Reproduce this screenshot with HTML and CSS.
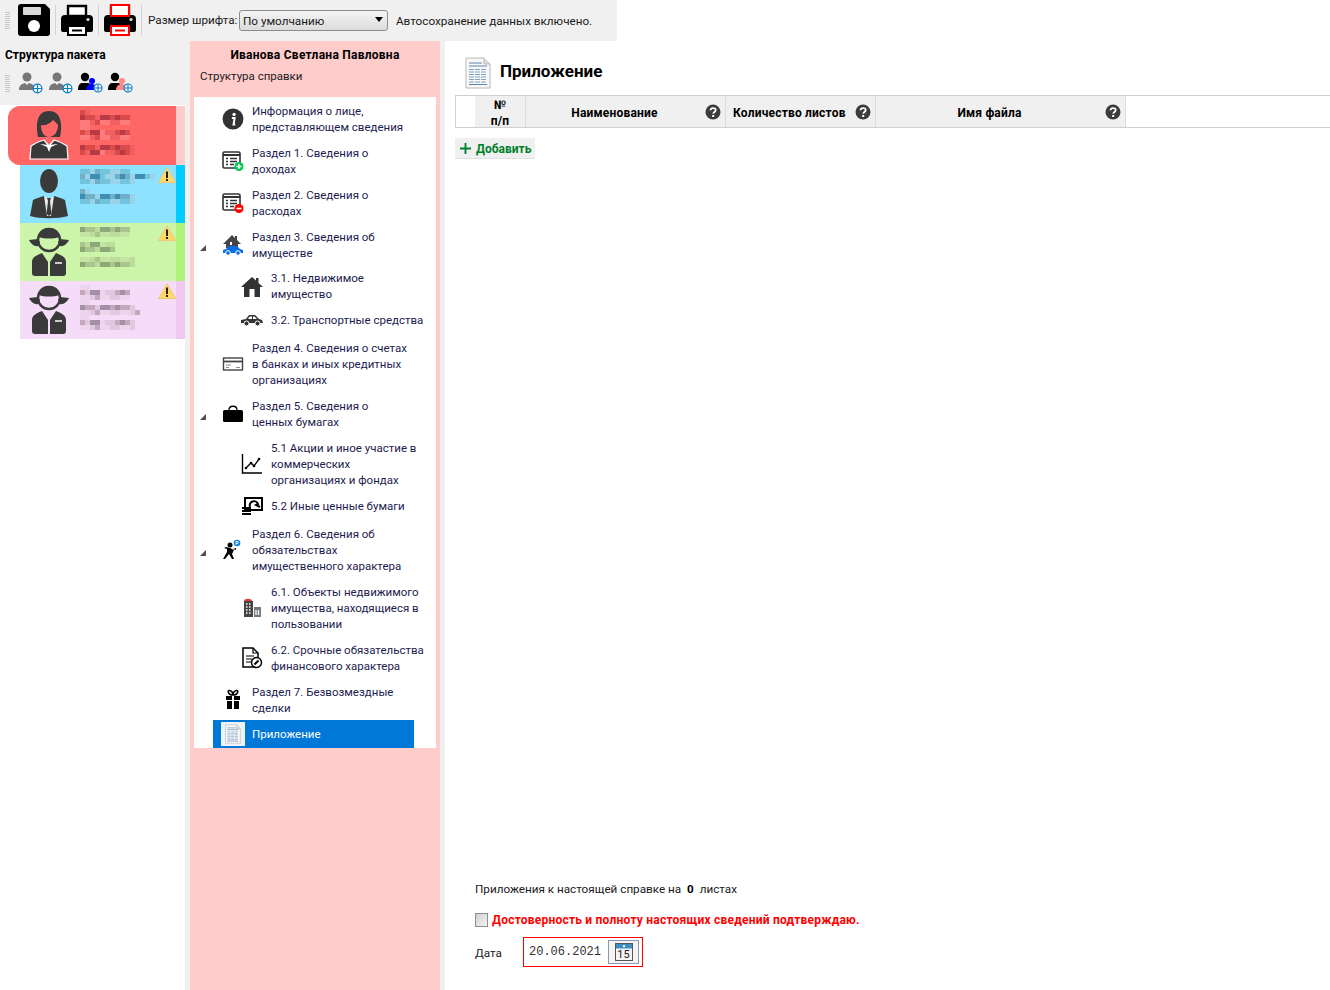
FILE: index.html
```html
<!DOCTYPE html>
<html lang="ru">
<head>
    <meta charset="UTF-8">
    <title>Справка БК</title>
    <link rel="stylesheet" href="styles.css">
</head>
<body>
    <svg class="defs" width="0" height="0">
        <symbol id="printer" viewBox="0 0 32 32">
            <path d="M7 2h18v10H7z" fill="#fff" stroke="#000" stroke-width="2.4"/>
            <path d="M4 11h24a4 4 0 0 1 4 4v11a2 2 0 0 1-2 2h-4v-7H6v7H2a2 2 0 0 1-2-2V15a4 4 0 0 1 4-4z"/>
            <circle cx="27" cy="15.500" r="1.600" fill="#ddd"/>
        </symbol>
        <symbol id="plus-badge" viewBox="0 0 12 12">
            <circle cx="6" cy="6" r="4.800" fill="#fff" stroke="#0a7cc4" stroke-width="1.400"/>
            <path d="M6 1.500v9M1.500 6h9" stroke="#0a7cc4" stroke-width="1.300"/>
        </symbol>
        <symbol id="girl" viewBox="0 0 40 50">
            <path d="M0 13l9-1 2 3-2 4c-3 1-7-2-9-6zM40 13l-9-1-2 3 2 4c3 1 7-2 9-6z" fill="#3a3a3a"/>
            <circle cx="20" cy="13" r="11" fill="none" stroke="#3a3a3a" stroke-width="2.400"/>
            <path d="M10 10C10 4 14 1 20 1s10 3 10 9c-5 2-15 2-20 0z" fill="#3a3a3a"/>
            <path d="M13 26l6 9v14H6a3 3 0 0 1-3-3V35c0-5 5-7 10-9zM27 26l-6 9v14h13a3 3 0 0 0 3-3V35c0-5-5-7-10-9z" fill="#3a3a3a"/>
            <path d="M26 36h7" stroke="#fff" stroke-width="1.500"/>
        </symbol>
        <symbol id="question" viewBox="0 0 16 16">
            <circle cx="8" cy="8" r="7.500" fill="#3c3c3c"/>
            <path d="M5.500 6.200C5.700 3.400 10.700 3.400 10.700 6c0 2-2.400 1.900-2.400 3.800" fill="none" stroke="#fff" stroke-width="1.800"/>
            <rect x="7.200" y="11" width="2" height="2" fill="#fff"/>
        </symbol>
        <symbol id="warning" viewBox="0 0 18 16">
            <path d="M9 .8L17.500 15.500H.5z" fill="#ffd966" stroke="#f0c878" stroke-linejoin="round"/>
            <rect x="8" y="4.500" width="2" height="6.500" fill="#222"/>
            <rect x="8" y="12" width="2" height="2" fill="#222"/>
        </symbol>
        <symbol id="sheet" viewBox="0 0 26 32">
            <path d="M1 1h18l6 6v24H1z" fill="#f8f8f8" stroke="#b8b8b8"/>
            <path d="M19 1v6h6" fill="#ddd" stroke="#b8b8b8"/>
            <path d="M4 6h13M4 9h18" stroke="#5c86ad"/>
            <path d="M4 12.500h18M4 15h18M4 17.500h18M4 20h18M4 22.500h18M4 25h18" stroke="#7fa2c2" stroke-dasharray="5 1"/>
            <path d="M4 27.500h18" stroke="#5c86ad"/>
        </symbol>
    </svg>

    <div class="toolbar">
        <span class="grip"></span>
        <svg class="tool" viewBox="0 0 32 32">
            <path d="M3 0h24l5 5v24a3 3 0 0 1-3 3H3a3 3 0 0 1-3-3V3a3 3 0 0 1 3-3z"/>
            <rect x="5" y="3" width="18" height="8" rx="1" fill="#fff" fill-opacity=".85"/>
            <circle cx="16" cy="22" r="6" fill="#fff"/>
        </svg>
        <span class="sep"></span>
        <svg class="tool"><use href="#printer"/><path d="M7 22h18v9H7z" fill="#fff" stroke="#000" stroke-width="2"/><path d="M11 26.500h10" stroke="#000" stroke-width="2"/></svg>
        <span class="sep"></span>
        <svg class="tool"><use href="#printer"/><path d="M7 1h18v11H7z" fill="#fff" stroke="#f00" stroke-width="2"/><path d="M7 22h18v9H7z" fill="#fff" stroke="#f00" stroke-width="2"/><path d="M11 26.500h10" stroke="#f00" stroke-width="2"/></svg>
        <span class="sep"></span>
        <label class="font-label">Размер шрифта:</label>
        <div class="select">По умолчанию<span class="select-arrow"></span></div>
        <span class="autosave">Автосохранение данных включено.</span>
    </div>

    <div class="workspace">
        <aside class="package">
            <div class="package-head">
                <h2 class="package-title">Структура пакета</h2>
                <div class="person-tools">
                    <span class="grip grip-small"></span>
                    <svg class="person-tool" viewBox="0 0 25 22">
                        <circle cx="9" cy="5" r="4.500" fill="#777"/><path d="M1 18c0-5 3-6 6-7l2 2 2-2c3 1 6 2 6 7z" fill="#777"/>
                        <use href="#plus-badge" x="14" y="11" width="11" height="11"/>
                    </svg>
                    <svg class="person-tool" viewBox="0 0 25 22">
                        <circle cx="9" cy="5" r="4.500" fill="#777"/><path d="M1 18c0-5 3-6 6-7l2 2 2-2c3 1 6 2 6 7z" fill="#777"/>
                        <use href="#plus-badge" x="14" y="11" width="11" height="11"/>
                    </svg>
                    <svg class="person-tool" viewBox="0 0 25 22">
                        <circle cx="7" cy="5" r="4.200"/><path d="M0 18c0-5 2-7 4-7h6c2 0 4 2 4 7z"/>
                        <circle cx="14" cy="9" r="3" fill="#00f"/><path d="M8 18c0-4 3-6 6-6s4 2 4 6z" fill="#00f"/>
                        <use href="#plus-badge" x="15" y="11" width="10" height="10"/>
                    </svg>
                    <svg class="person-tool" viewBox="0 0 25 22">
                        <circle cx="7" cy="5" r="4.200"/><path d="M0 18c0-5 2-7 4-7h6c2 0 4 2 4 7z"/>
                        <circle cx="14" cy="9" r="3" fill="#f88"/><path d="M8 18c0-4 3-6 6-6s4 2 4 6z" fill="#f88"/>
                        <use href="#plus-badge" x="15" y="11" width="10" height="10"/>
                    </svg>
                </div>
            </div>
            <div class="cards">
                <div class="card card-red">
                    <div class="card-body">
                        <svg class="avatar" viewBox="0 0 40 50">
                            <path d="M9 27C6 12 9 1 20 1s14 11 11 26z" fill="#3a3a3a"/>
                            <path d="M12 15c4 1 9-1 12-5 2 2 4 3 5 5 0 7-4 12-9 12s-8-5-8-12z" fill="#ff6666"/>
                            <path d="M2 36c5-4 10-5 13-6l5 6 5-6c3 1 8 2 13 6l1 13H1z" fill="#3a3a3a" stroke="#fff" stroke-width="1.200"/>
                            <path d="M11 34l9 1 9-1-7 3-2 5-2-5z" fill="#fff"/>
                        </svg>
                        <div class="blur">
                            <div class="mos w10"></div><div class="mos w50 alt"></div><div class="mos w50 pale"></div><div class="mos w10 pale"></div>
                            <div class="mos w50"></div><div class="mos w50 pale"></div><div class="gap"></div>
                            <div class="mos w55 alt"></div><div class="mos w55"></div>
                        </div>
                    </div>
                    <div class="card-strip"></div>
                </div>
                <div class="card card-blue">
                    <div class="card-body">
                        <svg class="avatar" viewBox="0 0 40 50">
                            <ellipse cx="20" cy="12" rx="9" ry="12" fill="#3a3a3a"/>
                            <path d="M1 47l3-16c3-2 8-3 11-4l5 4 5-4c3 1 8 2 11 4l3 16c-10 3-28 3-38 0z" fill="#3a3a3a"/>
                            <path d="M15 27l5 3 5-3-3 20h-4z" fill="#fff" fill-opacity=".9"/>
                            <path d="M18 29h4l-1 3 1.500 13-2.500 2-2.500-2L19 32z" fill="#3a3a3a"/>
                        </svg>
                        <div class="blur">
                            <div class="mos w50 pale"></div><div class="mos w75"></div><div class="mos w55 pale"></div><div class="gap"></div>
                            <div class="mos w10"></div><div class="mos w55 alt"></div><div class="mos w55 pale"></div>
                        </div>
                        <svg class="warn"><use href="#warning"/></svg>
                    </div>
                    <div class="card-strip"></div>
                </div>
                <div class="card card-green">
                    <div class="card-body">
                        <svg class="avatar"><use href="#girl"/></svg>
                        <div class="blur">
                            <div class="mos w50 alt"></div><div class="mos w50 pale"></div><div class="gap"></div>
                            <div class="mos w35"></div><div class="mos w35 alt"></div><div class="gap"></div>
                            <div class="mos w55 pale"></div><div class="mos w55 alt"></div>
                        </div>
                        <svg class="warn"><use href="#warning"/></svg>
                    </div>
                    <div class="card-strip"></div>
                </div>
                <div class="card card-lilac">
                    <div class="card-body">
                        <svg class="avatar"><use href="#girl"/></svg>
                        <div class="blur">
                            <div class="mos w10 pale"></div><div class="mos w50"></div><div class="mos w50 pale"></div><div class="mos w10 pale"></div>
                            <div class="mos w55 alt"></div><div class="mos w60 pale"></div><div class="mos w10 pale"></div>
                            <div class="mos w55"></div><div class="mos w55 pale"></div>
                        </div>
                        <svg class="warn"><use href="#warning"/></svg>
                    </div>
                    <div class="card-strip"></div>
                </div>
            </div>
        </aside>

        <nav class="person">
            <h2 class="person-name">Иванова Светлана Павловна</h2>
            <div class="person-sub">Структура справки</div>
            <div class="tree">
                <div class="item">
                    <svg class="ico" viewBox="0 0 20 20"><circle cx="10" cy="10" r="9.500" fill="#333"/><path d="M9 9h2.500l-1 6H12" fill="none" stroke="#fff" stroke-width="1.800"/><circle cx="11" cy="5.800" r="1.500" fill="#fff"/></svg>
                    <span>Информация о лице,<br>представляющем сведения</span>
                </div>
                <div class="item">
                    <svg class="ico" viewBox="0 0 22 20"><rect x="1" y="1" width="17" height="16" rx="1.500" fill="#fff" stroke="#333" stroke-width="1.600"/><path d="M1 4h17" stroke="#333" stroke-width="2"/><path d="M4 7.500h2M8 7.500h7M4 10.500h2M8 10.500h7M4 13.500h2M8 13.500h4" stroke="#333" stroke-width="1.300"/><circle cx="17" cy="15.500" r="4.500" fill="#00c853"/><path d="M14.500 15.500h5M17 13v5" stroke="#fff" stroke-width="1.500"/></svg>
                    <span>Раздел 1. Сведения о<br>доходах</span>
                </div>
                <div class="item">
                    <svg class="ico" viewBox="0 0 22 20"><rect x="1" y="1" width="17" height="16" rx="1.500" fill="#fff" stroke="#333" stroke-width="1.600"/><path d="M1 4h17" stroke="#333" stroke-width="2"/><path d="M4 7.500h2M8 7.500h7M4 10.500h2M8 10.500h7M4 13.500h2M8 13.500h4" stroke="#333" stroke-width="1.300"/><circle cx="17" cy="15.500" r="4.500" fill="#f00"/><path d="M14.500 15.500h5" stroke="#fff" stroke-width="1.600"/></svg>
                    <span>Раздел 2. Сведения о<br>расходах</span>
                </div>
                <div class="item open">
                    <svg class="ico" viewBox="0 0 22 22"><path d="M1 10L10 1l3 3V2h2v4l4 4h-3v4H4v-4z" fill="#444"/><path d="M10 8v3H8V8z" fill="#fff"/><path d="M1 19v-3l3-1 3-3h8l3 3 3 1v3z" fill="#0a6fe0"/><circle cx="6" cy="19" r="2.300" fill="#0a6fe0" stroke="#fff"/><circle cx="16" cy="19" r="2.300" fill="#0a6fe0" stroke="#fff"/></svg>
                    <span>Раздел 3. Сведения об<br>имуществе</span>
                </div>
                <div class="item sub tight">
                    <svg class="ico" viewBox="0 0 22 22"><path d="M0 11L11 1l4 3.600V2h2.500v4.900L22 11h-3v10H3V11z" fill="#333"/><rect x="8.500" y="13" width="5" height="8" fill="#fff"/></svg>
                    <span>3.1. Недвижимое<br>имущество</span>
                </div>
                <div class="item sub one">
                    <svg class="ico" viewBox="0 0 22 22"><path d="M0 13v-3l5-1 3-4h6l4 4 3 1 1 3z" fill="#333"/><path d="M8.500 6.500h2.500V9H7zM12 6.500h1.500L16 9h-4z" fill="#fff"/><circle cx="5.500" cy="13.500" r="2.500" fill="#333" stroke="#fff"/><circle cx="16.500" cy="13.500" r="2.500" fill="#333" stroke="#fff"/></svg>
                    <span>3.2. Транспортные средства</span>
                </div>
                <div class="item">
                    <svg class="ico" viewBox="0 0 22 22"><rect x="1.500" y="5" width="19" height="12" fill="#fff" stroke="#444" stroke-width="1.400"/><path d="M1 8.500h20" stroke="#444" stroke-width="1.800"/><path d="M4 12h5M4 14.500h3M14 14.500h4" stroke="#888"/></svg>
                    <span>Раздел 4. Сведения о счетах<br>в банках и иных кредитных<br>организациях</span>
                </div>
                <div class="item open">
                    <svg class="ico" viewBox="0 0 22 22"><path d="M7 7c0-5 8-5 8 0" fill="none" stroke="#000" stroke-width="1.300"/><rect x="1" y="7" width="20" height="12" rx="1.500"/></svg>
                    <span>Раздел 5. Сведения о<br>ценных бумагах</span>
                </div>
                <div class="item sub">
                    <svg class="ico" viewBox="0 0 22 22"><path d="M1.500 1v19H21" fill="none" stroke="#000" stroke-width="1.400"/><path d="M5 15l5-5 3 3 5-7" fill="none" stroke="#000" stroke-width="1.300"/><circle cx="5" cy="15" r="1.300"/><circle cx="10" cy="10" r="1.300"/><circle cx="13" cy="13" r="1.300"/><circle cx="18" cy="6" r="1.300"/></svg>
                    <span>5.1 Акции и иное участие в<br>коммерческих<br>организациях и фондах</span>
                </div>
                <div class="item sub one">
                    <svg class="ico" viewBox="0 0 22 22"><rect x="4" y="2" width="17" height="12" fill="#fff" stroke="#000" stroke-width="2"/><path d="M9 11a4 4 0 0 1 8-3l-2 1 4 2" fill="none" stroke="#000" stroke-width="2"/><path d="M1 11h9v2H1zM1 14h9v2H1zM1 17h9v2H1z"/></svg>
                    <span>5.2 Иные ценные бумаги</span>
                </div>
                <div class="item open">
                    <svg class="ico" viewBox="0 0 22 22"><circle cx="8" cy="6" r="2.500"/><path d="M4 8l4 1 4 2-2 4 2 5h-2l-3-5-4 5H1l4-7V10L2 9zM11 10l3-1v2z"/><circle cx="15" cy="4" r="3.300" fill="#0a84d6"/><path d="M14 6V2.500h2v2h-2" fill="none" stroke="#fff" stroke-width=".8"/></svg>
                    <span>Раздел 6. Сведения об<br>обязательствах<br>имущественного характера</span>
                </div>
                <div class="item sub">
                    <svg class="ico" viewBox="0 0 22 22"><path d="M3 4c0-3 8-3 8 0z" fill="#e53935"/><rect x="3" y="4" width="9" height="16" fill="#444"/><rect x="13" y="10" width="7" height="10" fill="#777"/><path d="M5 7h1.500M8 7h1.500M5 10h1.500M8 10h1.500M5 13h1.500M8 13h1.500M5 16h1.500M8 16h1.500M15 13v5M17.500 13v5" stroke="#fff" stroke-width="1.300"/></svg>
                    <span>6.1. Объекты недвижимого<br>имущества, находящиеся в<br>пользовании</span>
                </div>
                <div class="item sub">
                    <svg class="ico" viewBox="0 0 22 22"><path d="M2 1h10l5 5v14H2z" fill="#fff" stroke="#000" stroke-width="1.500"/><path d="M12 1v5h5M5 9h8M5 12h6M5 15h5" fill="none" stroke="#000" stroke-width="1.200"/><circle cx="15.500" cy="15.500" r="5" fill="#fff" stroke="#000" stroke-width="1.400"/><path d="M13.500 17.500l4-4" stroke="#000" stroke-width="2"/></svg>
                    <span>6.2. Срочные обязательства<br>финансового характера</span>
                </div>
                <div class="item">
                    <svg class="ico" viewBox="0 0 22 22"><path d="M11 6C6 6 5 1 7.500 1.500 9.500 2 11 4 11 6zM11 6c5 0 6-5 3.500-4.500C12.500 2 11 4 11 6z" fill="none" stroke="#000" stroke-width="1.500"/><path d="M4 7h6v4H4zM12 7h6v4h-6zM5 12h5v8H5zM12 12h5v8h-5z"/></svg>
                    <span>Раздел 7. Безвозмездные<br>сделки</span>
                </div>
                <div class="item selected">
                    <span class="selected-ico"><svg class="ico-sheet"><use href="#sheet"/></svg></span>
                    <span>Приложение</span>
                </div>
            </div>
        </nav>

        <main class="content">
            <div class="content-head">
                <svg class="title-ico"><use href="#sheet"/></svg>
                <h1 class="content-title">Приложение</h1>
            </div>
            <div class="grid-head">
                <div class="col col-blank"></div>
                <div class="col col-num">№<br>п/п</div>
                <div class="col col-name">Наименование<svg class="help"><use href="#question"/></svg></div>
                <div class="col col-count">Количество листов<svg class="help"><use href="#question"/></svg></div>
                <div class="col col-file">Имя файла<svg class="help"><use href="#question"/></svg></div>
            </div>
            <button class="add-btn"><svg class="add-plus" viewBox="0 0 14 14"><path d="M7 1v12M1 7h12" stroke="#00802b" stroke-width="2"/></svg>Добавить</button>
            <div class="footer">
                <p class="sheets-line">Приложения к настоящей справке на <b>0</b> листах</p>
                <div class="confirm"><span class="check"></span><b>Достоверность и полноту настоящих сведений подтверждаю.</b></div>
                <div class="date-row">
                    <span class="date-label">Дата</span>
                    <div class="date-box">
                        <span class="date-value">20.06.2021</span>
                        <span class="cal-btn">
                            <svg class="cal" viewBox="0 0 18 18"><rect x=".5" y=".5" width="17" height="17" fill="#f4f4f4" stroke="#555"/><rect x="1" y="1" width="16" height="4.500" fill="#3f8fc4"/><rect x="8" y="2.200" width="2" height="2" fill="#fff"/></svg>
                            <span class="cal-num">15</span>
                        </span>
                    </div>
                </div>
            </div>
        </main>
    </div>
</body>
</html>
```

FILE: styles.css
```css
* {
    box-sizing: border-box;
    margin: 0;
    padding: 0;
}
body {
    width: 1330px;
    height: 990px;
    overflow: hidden;
    background: #fff;
    font-family: Roboto, sans-serif;
    font-size: 11.7px;
    line-height: 16px;
    color: #1a1a1a;
}
.defs {
    position: absolute;
}

/* Top toolbar */
.toolbar {
    display: flex;
    align-items: center;
    width: 617px;
    height: 41px;
    padding: 0 0 1px 5px;
    background: #f0f0f0;
}
.grip {
    width: 5px;
    height: 18px;
    margin-right: 8px;
    background: repeating-linear-gradient(0deg, #c8c8c8 0 1px, #f0f0f0 1px 2px);
}
.tool {
    width: 32px;
    height: 32px;
}
.sep {
    width: 1px;
    height: 30px;
    margin: 0 5px;
    background: #d2d2d2;
}
.font-label {
    width: 91px;
    margin-left: 1px;
    white-space: nowrap;
}
.select {
    position: relative;
    width: 149px;
    height: 21px;
    padding: 2px 3px;
    border: 1px solid #8c8c8c;
    border-radius: 3px;
    background: linear-gradient(#f4f4f4, #dcdcdc);
}
.select-arrow {
    position: absolute;
    top: 6px;
    right: 4px;
    border: 4px solid transparent;
    border-top: 5px solid #000;
    border-bottom: 0;
}
.autosave {
    margin-left: 8px;
    padding-top: 1px;
}

.workspace {
    display: flex;
    height: 949px;
}

/* Left column with the package */
.package {
    width: 190px;
    padding-right: 5px;
    background: #f0f0f0;
}
.package-head {
    height: 64px;
    margin-right: -5px;
    padding: 6px 0 0 5px;
}
.package-title {
    font-size: 12px;
    font-weight: 700;
    color: #000;
}
.person-tools {
    display: flex;
    align-items: center;
    gap: 5px;
    margin-top: 9px;
}
.grip-small {
    margin-right: 3px;
}
.person-tool {
    width: 25px;
    height: 22px;
}
.cards {
    height: 885px;
    padding-top: 1px;
    background: #fff;
}
.card {
    display: flex;
    height: 58px;
    margin-left: 20px;
}
.card-body {
    position: relative;
    display: flex;
    flex: 1;
    padding-left: 9px;
    background: var(--bg);
}
.card-strip {
    width: 9px;
    background: var(--strip);
}
.card-red {
    height: 59px;
    margin-left: 8px;
    --bg: #ff6666;
    --strip: #ffcccc;
    --a: #d94a4a;
    --b: #f06060;
    --c: #b93a44;
    --d: #ff7a7a;
}
.card-red .card-body {
    padding-left: 21px;
    border-radius: 12px 0 0 12px;
}
.card-blue {
    --bg: #8ce2ff;
    --strip: #00ccff;
    --a: #6fb0c8;
    --b: #9ad2e8;
    --c: #3f8db0;
    --d: #72c4dc;
}
.card-green {
    --bg: #ccf5aa;
    --strip: #b0f27a;
    --a: #a9c48c;
    --b: #bcdc9c;
    --c: #8aa878;
    --d: #c4e4a4;
}
.card-lilac {
    --bg: #f5dcf8;
    --strip: #f0c8f2;
    --a: #c4a8bc;
    --b: #e0c8e0;
    --c: #a090a8;
    --d: #eed4ec;
}
.avatar {
    flex: none;
    width: 40px;
    height: 50px;
    margin-top: 4px;
}
.blur {
    margin: 4px 0 0 11px;
}
.mos {
    height: 5px;
    background: repeating-linear-gradient(90deg, var(--a) 0 5px, var(--b) 5px 10px, var(--c) 10px 20px, var(--d) 20px 25px, var(--b) 25px 35px, var(--a) 35px 40px, var(--c) 40px 45px);
}
.mos.alt {
    background: repeating-linear-gradient(90deg, var(--c) 0 5px, var(--a) 5px 15px, var(--b) 15px 20px, var(--c) 20px 30px, var(--a) 30px 35px);
}
.mos.pale {
    background: repeating-linear-gradient(90deg, var(--d) 0 10px, var(--b) 10px 15px, var(--a) 15px 20px, var(--d) 20px 30px, var(--b) 30px 40px);
}
.gap {
    height: 5px;
}
.w10 { width: 10px; }
.w35 { width: 35px; }
.w50 { width: 50px; }
.w55 { width: 55px; }
.w60 { width: 60px; }
.w75 { width: 75px; }
.warn {
    position: absolute;
    top: 2px;
    right: 0;
    width: 18px;
    height: 16px;
}

/* Middle column with the tree */
.person {
    width: 250px;
    padding: 6px 4px 0 4px;
    background: #ffcccc;
    font-size: 11.5px;
}
.person-name {
    font-size: 12px;
    font-weight: 700;
    letter-spacing: .25px;
    color: #000;
    text-align: center;
}
.person-sub {
    margin: 5px 0 0 6px;
}
.tree {
    height: 651px;
    margin-top: 13px;
    padding-top: 1px;
    background: #fff;
    color: #1c1c50;
}
.item {
    position: relative;
    display: flex;
    align-items: center;
    padding: 5px 8px 5px 58px;
    white-space: nowrap;
}
.item.sub {
    padding-left: 77px;
}
.item.tight {
    line-height: 15.5px;
}
.item.one {
    padding-bottom: 7px;
}
.ico {
    position: absolute;
    top: 50%;
    left: 28px;
    width: 22px;
    height: 22px;
    margin-top: -11px;
}
.sub .ico {
    left: 47px;
}
.open::before {
    content: "";
    position: absolute;
    top: 50%;
    left: 6px;
    border-style: solid;
    border-width: 0 0 6px 6px;
    border-color: transparent transparent #505050;
}
.item.selected {
    width: 201px;
    height: 28px;
    margin: -1px 0 0 19px;
    padding: 0 0 0 39px;
    background: #0078d7;
    color: #fff;
}
.selected-ico {
    position: absolute;
    top: 2px;
    left: 8px;
    display: flex;
    justify-content: center;
    align-items: center;
    width: 24px;
    height: 24px;
    background: #eef3f7;
}
.ico-sheet {
    width: 16px;
    height: 20px;
}

/* Right content */
.content {
    display: flex;
    flex: 1;
    flex-direction: column;
    padding: 14px 0 0 10px;
    border-left: 5px solid #f0f0f0;
}
.content-head {
    display: flex;
    align-items: center;
    height: 36px;
    padding-left: 10px;
}
.title-ico {
    width: 26px;
    height: 32px;
}
.content-title {
    margin: -4px 0 0 9px;
    font-size: 17px;
    font-weight: 700;
    color: #000;
}
.grid-head {
    display: flex;
    height: 33px;
    margin-top: 4px;
    border-top: 1px solid #d0d0d0;
    border-bottom: 1px solid #d0d0d0;
}
.col {
    position: relative;
    display: flex;
    justify-content: center;
    align-items: center;
    padding-top: 2px;
    border-right: 1px solid #dcdcdc;
    background: #f0f0f0;
    font-size: 12px;
    font-weight: 700;
    letter-spacing: .2px;
    color: #000;
    text-align: center;
}
.col-blank {
    width: 20px;
    border-left: 1px solid #d0d0d0;
    border-right: 0;
    background: #fff;
}
.col-num {
    width: 51px;
}
.col-name {
    width: 200px;
    padding-right: 22px;
}
.col-count {
    justify-content: flex-start;
    width: 150px;
    padding-left: 7px;
}
.col-file {
    width: 250px;
    padding-right: 22px;
}
.help {
    position: absolute;
    top: 8px;
    right: 4px;
    width: 16px;
    height: 16px;
}
.add-btn {
    display: flex;
    align-items: center;
    width: 80px;
    height: 21px;
    margin-top: 10px;
    padding: 1px 0 0 4px;
    border: 0;
    border-bottom: 1px solid #e0e0e0;
    background: #f0f0f0;
    font: 700 12px/16px Roboto, sans-serif;
    color: #00802b;
}
.add-plus {
    width: 13px;
    height: 13px;
    margin-right: 4px;
}
.footer {
    margin-top: auto;
    padding: 0 0 23px 20px;
}
.sheets-line b {
    margin: 0 3px;
    color: #000;
}
.confirm {
    display: flex;
    align-items: center;
    gap: 4px;
    margin-top: 15px;
    font-size: 12px;
    letter-spacing: .22px;
    color: #f00;
}
.check {
    width: 13px;
    height: 14px;
    border: 1px solid #8e8e8e;
    background: linear-gradient(135deg, #d0d0d0, #f4f4f4);
}
.date-row {
    display: flex;
    align-items: center;
    margin-top: 9px;
}
.date-label {
    width: 48px;
    padding-top: 2px;
}
.date-box {
    display: flex;
    align-items: center;
    justify-content: space-between;
    width: 120px;
    height: 30px;
    padding: 0 3px 0 5px;
    border: 1px solid #f00;
}
.date-value {
    font-family: "Liberation Mono", monospace;
    font-size: 12px;
    color: #333;
}
.cal-btn {
    position: relative;
    display: flex;
    justify-content: center;
    align-items: center;
    width: 31px;
    height: 24px;
    border: 1px solid #8a9aa8;
    background: #f4f4f4;
}
.cal {
    width: 18px;
    height: 18px;
}
.cal-num {
    position: absolute;
    top: 7px;
    left: 0;
    width: 100%;
    font-size: 11px;
    line-height: 14px;
    color: #222;
    text-align: center;
}
```
